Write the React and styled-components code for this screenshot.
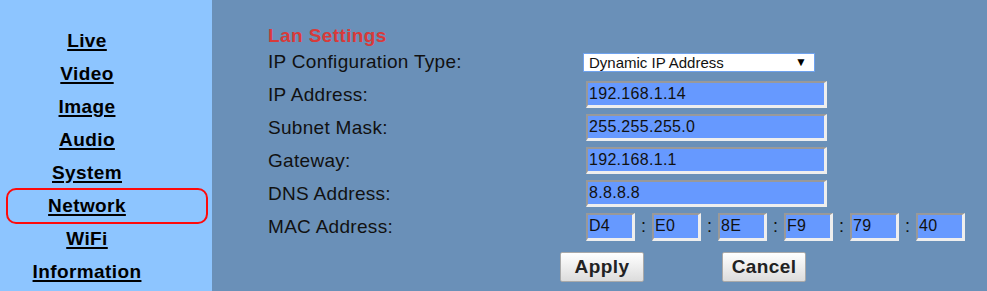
import React from "react";
import styled, { createGlobalStyle } from "styled-components";

const Global = createGlobalStyle`
  html, body { margin: 0; padding: 0; height: 100%; }
  body { font-family: "Liberation Sans", Arial, sans-serif; }
  #root { height: 100%; }
`;

const Page = styled.div`
  display: flex;
  height: 291px;
  overflow: hidden;
  background: #6a90b8;
`;

const Sidebar = styled.nav`
  width: 212px;
  flex: none;
  background: #8dc5ff;
  padding-top: 24px;
  box-sizing: border-box;
  display: flex;
  flex-direction: column;
`;

const NavItem = styled.a`
  position: relative;
  display: flex;
  align-items: center;
  justify-content: center;
  height: 33px;
  padding-right: 38px;
  font-size: 19px;
  font-weight: bold;
  letter-spacing: 0.4px;
  color: #000;
  text-decoration: underline;
  text-decoration-thickness: 2px;
  text-underline-offset: 2px;
  cursor: pointer;

  ${(p) =>
    p.$active &&
    `
    &::after {
      content: "";
      position: absolute;
      left: 6px;
      right: 4px;
      top: -1px;
      bottom: -2px;
      border: 2px solid #ff0a0a;
      border-radius: 10px;
      pointer-events: none;
    }
  `}
`;

const Main = styled.main`
  flex: 1;
  padding: 26px 0 0 56px;
  box-sizing: border-box;
`;

const Heading = styled.div`
  height: 20px;
  line-height: 20px;
  font-size: 19px;
  font-weight: bold;
  letter-spacing: 0.4px;
  color: #d83a3a;
`;

const Form = styled.div`
  display: grid;
  grid-template-columns: 315px auto;
  grid-auto-rows: 33px;
  grid-template-rows: 32px;
  align-items: center;
`;

const Label = styled.div`
  font-size: 19px;
  letter-spacing: 0.3px;
  color: #111;
`;

const Field = styled.div`
  display: flex;
  align-items: center;
  padding-left: ${(p) => p.$indent ?? 3}px;
`;

const Select = styled.div`
  box-sizing: border-box;
  width: 232px;
  height: 19px;
  background: #fff;
  border: 1px solid #6ea2ee;
  display: flex;
  align-items: center;
  justify-content: space-between;
  padding: 0 7px 0 5px;
  font-size: 15px;
  color: #111;
`;

const Arrow = styled.span`
  font-size: 12px;
  color: #000;
`;

const Input = styled.div`
  box-sizing: border-box;
  width: ${(p) => p.$w}px;
  height: ${(p) => p.$h || 27}px;
  background: #6699ff;
  border-style: solid;
  border-width: 2px 3px 3px 2px;
  border-color: #999 #eee #eee #999;
  display: flex;
  align-items: center;
  padding-left: 1px;
  font-size: 16px;
  letter-spacing: 0.3px;
  color: #111;
`;

const Colon = styled.span`
  width: 17px;
  text-align: center;
  font-size: 18px;
  color: #111;
`;

const Buttons = styled.div`
  display: flex;
  gap: 78px;
  margin: 9px 0 0 292px;
`;

const Button = styled.button`
  box-sizing: border-box;
  width: 84px;
  height: 30px;
  border: 1px solid #a9a9a9;
  border-radius: 2px;
  background: linear-gradient(#ffffff, #dcdcdc);
  font-family: "Liberation Sans", Arial, sans-serif;
  font-size: 19px;
  font-weight: bold;
  letter-spacing: 0.4px;
  color: #222;
  padding: 0;
  cursor: pointer;
`;

const nav = ["Live", "Video", "Image", "Audio", "System", "Network", "WiFi", "Information"];
const rows = [
  ["IP Address:", "192.168.1.14"],
  ["Subnet Mask:", "255.255.255.0"],
  ["Gateway:", "192.168.1.1"],
  ["DNS Address:", "8.8.8.8"],
];
const mac = ["D4", "E0", "8E", "F9", "79", "40"];

export default function App() {
  return (
    <>
      <Global />
      <Page>
        <Sidebar>
          {nav.map((n) => (
            <NavItem key={n} $active={n === "Network"}>
              {n}
            </NavItem>
          ))}
        </Sidebar>
        <Main>
          <Heading>Lan Settings</Heading>
          <Form>
            <Label>IP Configuration Type:</Label>
            <Field $indent={0}>
              <Select>
                <span>Dynamic IP Address</span>
                <Arrow>▼</Arrow>
              </Select>
            </Field>
            {rows.map(([l, v]) => (
              <React.Fragment key={l}>
                <Label>{l}</Label>
                <Field>
                  <Input $w={241}>{v}</Input>
                </Field>
              </React.Fragment>
            ))}
            <Label>MAC Address:</Label>
            <Field>
              {mac.map((m, i) => (
                <React.Fragment key={i}>
                  {i > 0 && <Colon>:</Colon>}
                  <Input $w={49} $h={28}>{m}</Input>
                </React.Fragment>
              ))}
            </Field>
          </Form>
          <Buttons>
            <Button>Apply</Button>
            <Button>Cancel</Button>
          </Buttons>
        </Main>
      </Page>
    </>
  );
}
